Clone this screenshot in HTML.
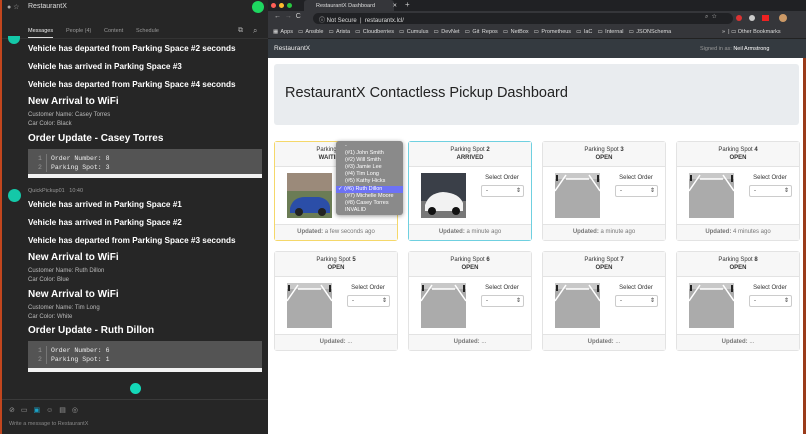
<!DOCTYPE html>
<html><head><meta charset="utf-8"><style>
*{margin:0;padding:0;box-sizing:border-box}
body{width:806px;height:434px;overflow:hidden;background:#1f1f1f;font-family:"Liberation Sans",sans-serif;position:relative}
.a{position:absolute;white-space:nowrap}
.l{position:absolute;left:0;top:0;width:268px;height:434px;background:#262626;border-left:2px solid #c2461e}
.w{color:#fff;font-weight:bold}
.h1{font-size:8.2px}
.h2{font-size:10px}
.sm{font-size:6px;color:#bbb}
.code{position:absolute;left:26px;width:234px;background:#545454;border-bottom:4px solid #f2f2f2;font-family:"Liberation Mono",monospace;font-size:6.5px;color:#eee}
.code div{position:absolute;left:10px}
.card{position:absolute;width:124px;height:100px;border:1px solid #e3e3e3;background:#fff;border-radius:3px;font-size:6px;color:#333;text-align:center}
.ch{height:25px;background:#f7f7f7;border-bottom:1px solid #e3e3e3;padding-top:4px;line-height:8px}
.cf{position:absolute;left:0;right:0;bottom:0;height:16px;background:#f7f7f7;border-top:1px solid #e3e3e3;line-height:15px;color:#777}
.img{position:absolute;left:12px;top:31px;width:45px;height:45px}
.so{position:absolute;left:68px;top:33px;width:50px;font-size:6px}
.sel{position:absolute;left:72px;top:43px;width:43px;height:12px;border:1px solid #ccc;border-radius:2px;background:#fff;font-size:6px;text-align:left;padding-left:4px;line-height:10px}
.sel:after{content:"⇕";position:absolute;right:2px;font-size:6px}
</style></head><body>
<div class="l">
<div class="a" style="left:5px;top:3px;color:#aaa;font-size:7px">● ☆</div>
<div class="a" style="left:26px;top:3px;color:#ddd;font-size:7px">RestaurantX</div>
<div class="a" style="left:250px;top:1px;width:12px;height:12px;border-radius:50%;background:#1ed760"></div>
<div class="a" style="left:26px;top:28px;color:#eee;font-size:5.5px">Messages</div>
<div class="a" style="left:26px;top:37px;width:25px;height:1px;background:#ddd"></div>
<div class="a" style="left:64px;top:28px;color:#999;font-size:5.5px">People (4)</div>
<div class="a" style="left:102px;top:28px;color:#999;font-size:5.5px">Content</div>
<div class="a" style="left:134px;top:28px;color:#999;font-size:5.5px">Schedule</div>
<div class="a" style="left:236px;top:27px;color:#aaa;font-size:7px">⧉</div>
<div class="a" style="left:251px;top:26px;color:#aaa;font-size:8px">⌕</div>
<div class="a" style="left:0;top:38px;width:266px;height:1px;background:#333"></div>
<div class="a" style="left:6px;top:36px;width:12px;height:8px;border-radius:0 0 6px 6px;background:#14c8a8"></div>
<div class="a w h1" style="left:26px;top:44px">Vehicle has departed from Parking Space #2 seconds</div>
<div class="a w h1" style="left:26px;top:62px">Vehicle has arrived in Parking Space #3</div>
<div class="a w h1" style="left:26px;top:80px">Vehicle has departed from Parking Space #4 seconds</div>
<div class="a w h2" style="left:26px;top:96px">New Arrival to WiFi</div>
<div class="a sm" style="left:26px;top:112px">Customer Name: Casey Torres</div>
<div class="a sm" style="left:26px;top:121px">Car Color: Black</div>
<div class="a w h2" style="left:26px;top:133px">Order Update - Casey Torres</div>
<div class="code" style="top:149px;height:29px"><div style="top:5px;color:#999;line-height:9px">1<br>2</div><div style="left:18px;top:5px;line-height:9px;border-left:1px solid #777;padding-left:4px">Order Number: 8<br>Parking Spot: 3</div></div>
<div class="a" style="left:6px;top:189px;width:13px;height:13px;border-radius:50%;background:#14c8a8"></div>
<div class="a" style="left:26px;top:188px;color:#999;font-size:5.5px">QuickPickup01 &nbsp; 10:40</div>
<div class="a w h1" style="left:26px;top:200px">Vehicle has arrived in Parking Space #1</div>
<div class="a w h1" style="left:26px;top:218px">Vehicle has arrived in Parking Space #2</div>
<div class="a w h1" style="left:26px;top:236px">Vehicle has departed from Parking Space #3 seconds</div>
<div class="a w h2" style="left:26px;top:252px">New Arrival to WiFi</div>
<div class="a sm" style="left:26px;top:268px">Customer Name: Ruth Dillon</div>
<div class="a sm" style="left:26px;top:277px">Car Color: Blue</div>
<div class="a w h2" style="left:26px;top:289px">New Arrival to WiFi</div>
<div class="a sm" style="left:26px;top:305px">Customer Name: Tim Long</div>
<div class="a sm" style="left:26px;top:314px">Car Color: White</div>
<div class="a w h2" style="left:26px;top:325px">Order Update - Ruth Dillon</div>
<div class="code" style="top:341px;height:31px"><div style="top:5px;color:#999;line-height:9px">1<br>2</div><div style="left:18px;top:5px;line-height:9px;border-left:1px solid #777;padding-left:4px">Order Number: 6<br>Parking Spot: 1</div></div>
<div class="a" style="left:128px;top:383px;width:11px;height:11px;border-radius:50%;background:#14d8b8"></div>
<div class="a" style="left:0;top:399px;width:266px;height:1px;background:#3a3a3a"></div>
<div class="a" style="left:7px;top:406px;color:#999;font-size:7px;letter-spacing:6px">⊘▭<span style="color:#1aa3c8">▣</span>☺▤◎</div>
<div class="a" style="left:7px;top:421px;color:#888;font-size:5.5px">Write a message to RestaurantX</div>
</div>
<!-- browser -->
<div class="a" style="left:268px;top:0;width:538px;height:11px;background:#202124"></div>
<div class="a" style="left:271px;top:3px;width:5px;height:5px;border-radius:50%;background:#fe5f57"></div>
<div class="a" style="left:279px;top:3px;width:5px;height:5px;border-radius:50%;background:#febc2e"></div>
<div class="a" style="left:287px;top:3px;width:5px;height:5px;border-radius:50%;background:#28c840"></div>
<div class="a" style="left:304px;top:0;width:90px;height:11px;background:#35363a;border-radius:3px 3px 0 0;color:#ddd;font-size:5.5px;padding:3px 0 0 12px">RestaurantX Dashboard <span style="margin-left:16px">✕</span></div>
<div class="a" style="left:405px;top:0;color:#ccc;font-size:8px">+</div>
<div class="a" style="left:268px;top:11px;width:538px;height:15px;background:#35363a"></div>
<div class="a" style="left:274px;top:13px;color:#ccc;font-size:7px">←&nbsp; <span style="color:#777">→</span>&nbsp; C</div>
<div class="a" style="left:313px;top:13px;width:420px;height:11px;background:#202124;border-radius:6px;color:#ddd;font-size:6px;padding:2px 0 0 6px">ⓘ Not Secure &nbsp;| &nbsp;restaurantx.lcl/</div>
<div class="a" style="left:705px;top:14px;color:#aaa;font-size:6px">⌕ &nbsp;☆</div>
<div class="a" style="left:736px;top:15px;width:6px;height:6px;border-radius:50%;background:#d33"></div>
<div class="a" style="left:749px;top:15px;width:6px;height:6px;border-radius:50%;background:#ccc"></div>
<div class="a" style="left:762px;top:15px;width:7px;height:6px;background:#e22"></div>
<div class="a" style="left:779px;top:14px;width:8px;height:8px;border-radius:50%;background:#c96"></div>
<div class="a" style="left:268px;top:26px;width:538px;height:13px;background:#35363a;border-bottom:1px solid #222"></div>
<div class="a" style="left:273px;top:29px;color:#ddd;font-size:5.5px;word-spacing:1px">▦ Apps &nbsp;▭ Ansible &nbsp;▭ Arista &nbsp;▭ Cloudberries &nbsp;▭ Cumulus &nbsp;▭ DevNet &nbsp;▭ Git Repos &nbsp;▭ NetBox &nbsp;▭ Prometheus &nbsp;▭ IaC &nbsp;▭ Internal &nbsp;▭ JSONSchema</div>
<div class="a" style="left:722px;top:29px;color:#ddd;font-size:5.5px">» &nbsp;| ▭ Other Bookmarks</div>
<div class="a" style="left:268px;top:39px;width:538px;height:19px;background:#343a40"></div>
<div class="a" style="left:274px;top:45px;color:#eee;font-size:6.5px">RestaurantX</div>
<div class="a" style="left:700px;top:46px;color:#999;font-size:5.5px">Signed in as: <span style="color:#fff">Neil Armstrong</span></div>
<div class="a" style="left:268px;top:58px;width:535px;height:376px;background:#fff"></div>
<div class="a" style="left:803px;top:58px;width:3px;height:376px;background:#9a3b1a"></div>
<div class="a" style="left:274px;top:64px;width:525px;height:61px;background:#e9ecef;border-radius:3px"></div>
<div class="a" style="left:285px;top:85px;color:#222;font-size:14.5px">RestaurantX Contactless Pickup Dashboard</div>
<svg width="0" height="0" style="position:absolute"><defs>
<g id="lot"><rect width="45" height="45" fill="#ababab"/><rect y="0" width="45" height="6" fill="#c8c8c8"/><path d="M0 18 L11 2 M45 18 L34 2 M11 6 L34 6" stroke="#fff" stroke-width="1.5"/><rect x="1" y="2" width="2" height="6" fill="#222"/><rect x="42" y="2" width="2" height="7" fill="#222"/></g>
</defs></svg>

<div class="card" style="left:274px;top:141px;border-color:#f5d86a"><div class="ch">Parking Spot <b>1</b><br><b>WAITING (6)</b></div>
<svg class="img" viewBox="0 0 45 45"><rect width="45" height="45" fill="#6b7c55"/><rect y="0" width="45" height="18" fill="#9b8a7a"/><path d="M3 35 Q6 24 18 24 L32 24 Q42 26 43 34 L43 40 L3 40Z" fill="#2b4ea8"/><circle cx="12" cy="39" r="4" fill="#222"/><circle cx="35" cy="39" r="4" fill="#222"/></svg>
<div class="so">Select Order</div><div class="sel">-</div>
<div class="cf"><b>Updated:</b> a few seconds ago</div></div>

<div class="card" style="left:408px;top:141px;border-color:#6fd0e0"><div class="ch">Parking Spot <b>2</b><br><b>ARRIVED</b></div>
<svg class="img" viewBox="0 0 45 45"><rect width="45" height="45" fill="#3a3f48"/><rect y="28" width="45" height="17" fill="#777"/><path d="M4 32 Q8 20 22 19 Q38 20 42 30 L42 38 L4 38Z" fill="#f2f2f2"/><circle cx="11" cy="38" r="4" fill="#111"/><circle cx="35" cy="38" r="4" fill="#111"/></svg>
<div class="so">Select Order</div><div class="sel">-</div>
<div class="cf"><b>Updated:</b> a minute ago</div></div>

<div class="card" style="left:542px;top:141px"><div class="ch">Parking Spot <b>3</b><br><b>OPEN</b></div>
<svg class="img" viewBox="0 0 45 45"><use href="#lot"/></svg>
<div class="so">Select Order</div><div class="sel">-</div>
<div class="cf"><b>Updated:</b> a minute ago</div></div>

<div class="card" style="left:676px;top:141px"><div class="ch">Parking Spot <b>4</b><br><b>OPEN</b></div>
<svg class="img" viewBox="0 0 45 45"><use href="#lot"/></svg>
<div class="so">Select Order</div><div class="sel">-</div>
<div class="cf"><b>Updated:</b> 4 minutes ago</div></div>

<div class="card" style="left:274px;top:251px"><div class="ch">Parking Spot <b>5</b><br><b>OPEN</b></div>
<svg class="img" viewBox="0 0 45 45"><use href="#lot"/></svg>
<div class="so">Select Order</div><div class="sel">-</div>
<div class="cf"><b>Updated:</b> ...</div></div>

<div class="card" style="left:408px;top:251px"><div class="ch">Parking Spot <b>6</b><br><b>OPEN</b></div>
<svg class="img" viewBox="0 0 45 45"><use href="#lot"/></svg>
<div class="so">Select Order</div><div class="sel">-</div>
<div class="cf"><b>Updated:</b> ...</div></div>

<div class="card" style="left:542px;top:251px"><div class="ch">Parking Spot <b>7</b><br><b>OPEN</b></div>
<svg class="img" viewBox="0 0 45 45"><use href="#lot"/></svg>
<div class="so">Select Order</div><div class="sel">-</div>
<div class="cf"><b>Updated:</b> ...</div></div>

<div class="card" style="left:676px;top:251px"><div class="ch">Parking Spot <b>8</b><br><b>OPEN</b></div>
<svg class="img" viewBox="0 0 45 45"><use href="#lot"/></svg>
<div class="so">Select Order</div><div class="sel">-</div>
<div class="cf"><b>Updated:</b> ...</div></div>

<div class="a" style="left:336px;top:141px;width:67px;height:74px;background:#8a8a8a;border-radius:3px;color:#fff;font-size:5.5px;line-height:7.1px;padding:2px 0 0 0;box-shadow:0 1px 4px rgba(0,0,0,.4)">
<div style="padding-left:9px">-</div>
<div style="padding-left:9px">(#1) John Smith</div>
<div style="padding-left:9px">(#2) Will Smith</div>
<div style="padding-left:9px">(#3) Jamie Lee</div>
<div style="padding-left:9px">(#4) Tim Long</div>
<div style="padding-left:9px">(#5) Kathy Hicks</div>
<div style="padding-left:2px;background:#6d72f5">✓ (#6) Ruth Dillon</div>
<div style="padding-left:9px">(#7) Michelle Moore</div>
<div style="padding-left:9px">(#8) Casey Torres</div>
<div style="padding-left:9px">INVALID</div>
</div>
</body></html>
